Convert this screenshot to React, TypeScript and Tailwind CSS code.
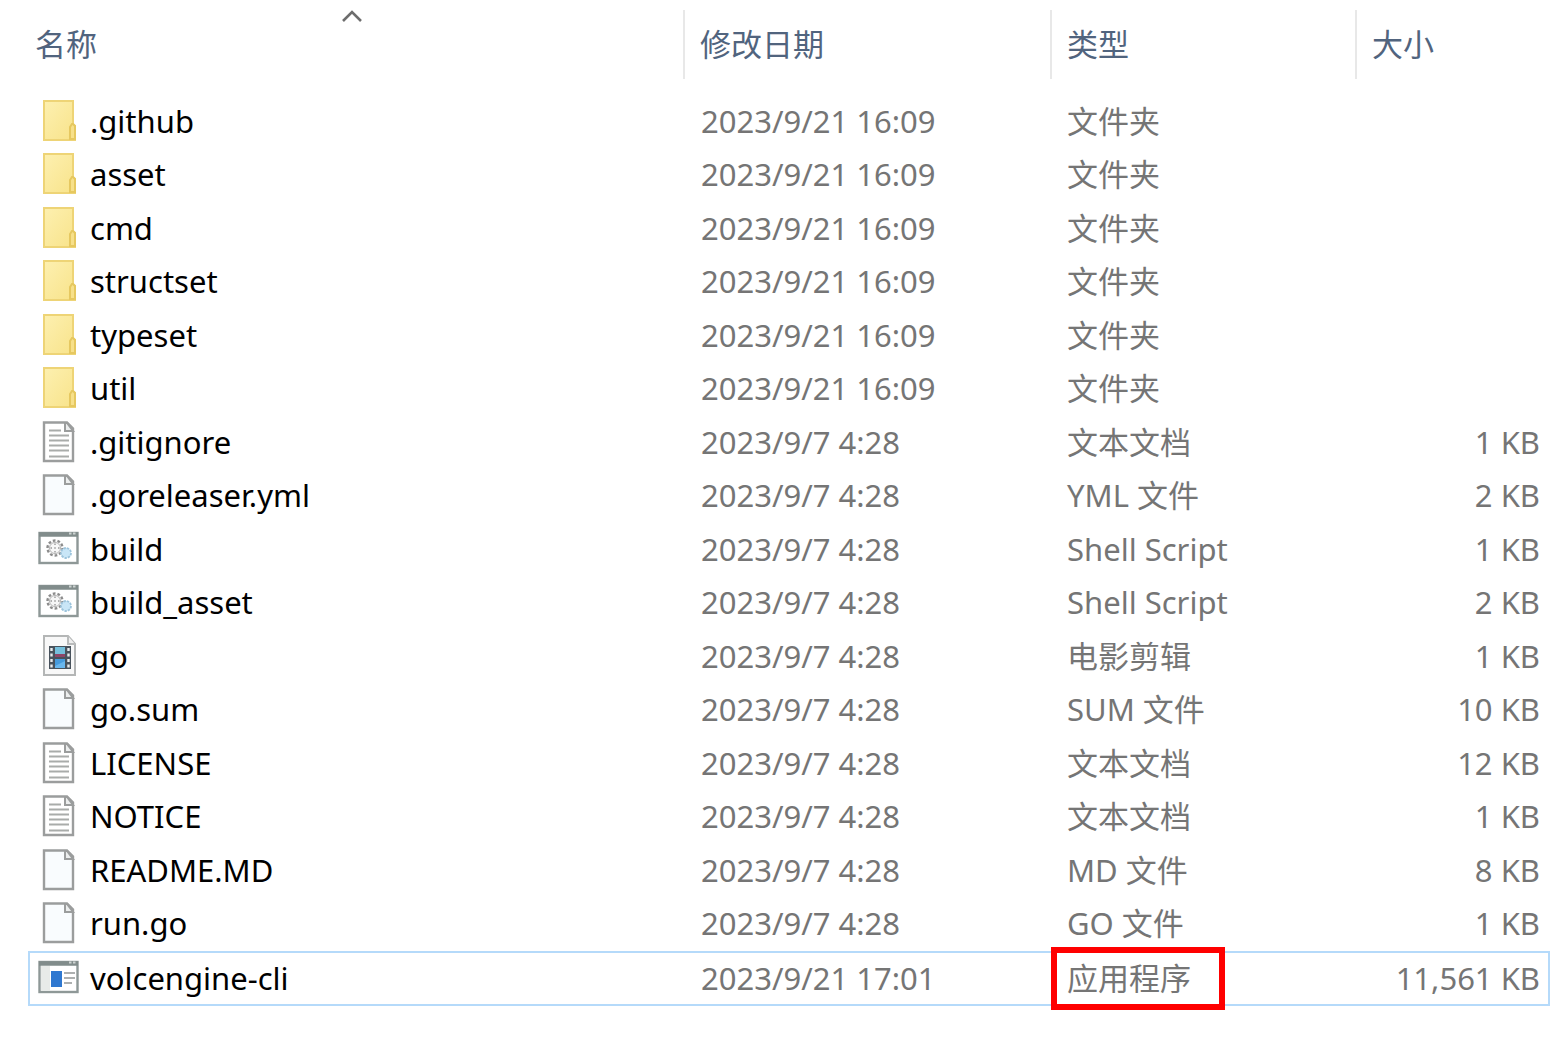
import React from "react";

type Kind = "folder" | "text" | "blank" | "script" | "movie" | "app";

interface Entry {
  name: string;
  kind: Kind;
  date: string;
  type: string;
  size?: string;
  selected?: boolean;
}

const entries: Entry[] = [
  { name: ".github", kind: "folder", date: "2023/9/21 16:09", type: "文件夹" },
  { name: "asset", kind: "folder", date: "2023/9/21 16:09", type: "文件夹" },
  { name: "cmd", kind: "folder", date: "2023/9/21 16:09", type: "文件夹" },
  { name: "structset", kind: "folder", date: "2023/9/21 16:09", type: "文件夹" },
  { name: "typeset", kind: "folder", date: "2023/9/21 16:09", type: "文件夹" },
  { name: "util", kind: "folder", date: "2023/9/21 16:09", type: "文件夹" },
  { name: ".gitignore", kind: "text", date: "2023/9/7 4:28", type: "文本文档", size: "1 KB" },
  { name: ".goreleaser.yml", kind: "blank", date: "2023/9/7 4:28", type: "YML 文件", size: "2 KB" },
  { name: "build", kind: "script", date: "2023/9/7 4:28", type: "Shell Script", size: "1 KB" },
  { name: "build_asset", kind: "script", date: "2023/9/7 4:28", type: "Shell Script", size: "2 KB" },
  { name: "go", kind: "movie", date: "2023/9/7 4:28", type: "电影剪辑", size: "1 KB" },
  { name: "go.sum", kind: "blank", date: "2023/9/7 4:28", type: "SUM 文件", size: "10 KB" },
  { name: "LICENSE", kind: "text", date: "2023/9/7 4:28", type: "文本文档", size: "12 KB" },
  { name: "NOTICE", kind: "text", date: "2023/9/7 4:28", type: "文本文档", size: "1 KB" },
  { name: "README.MD", kind: "blank", date: "2023/9/7 4:28", type: "MD 文件", size: "8 KB" },
  { name: "run.go", kind: "blank", date: "2023/9/7 4:28", type: "GO 文件", size: "1 KB" },
  { name: "volcengine-cli", kind: "app", date: "2023/9/21 17:01", type: "应用程序", size: "11,561 KB", selected: true },
];

function Folder() {
  return (
    <>
      <defs>
        <linearGradient id="folder-fill" x1="0" y1="0" x2="1" y2="1">
          <stop offset="0" stopColor="#fdf0b0" />
          <stop offset="1" stopColor="#f8e38a" />
        </linearGradient>
      </defs>
      <path d="M6 1h29v23l2 2v14H6z" fill="url(#folder-fill)" stroke="#eed476" strokeWidth="2" />
      <path d="M32 39V27l2-3h1l2 2v13z" fill="#f7e08a" stroke="#e6c860" strokeWidth="2" />
    </>
  );
}

function Page({ lines }: { lines?: boolean }) {
  return (
    <>
      <path d="M6 1.500h23l6 6V40H6z" fill={lines ? "#fff" : "#f9fcfe"} stroke="#9b9d9d" strokeWidth="2.400" />
      <path d="M27 2v8h8L29 2z" fill="#eceeee" stroke="#9b9d9d" strokeWidth="2" />
      {lines && (
        <path d="M11 9.500h12M11 14.500h20M11 19.500h20M11 24.500h20M11 29.500h20M11 35.500h20" stroke="#a9acaa" strokeWidth="2" />
      )}
    </>
  );
}

function Frame() {
  return (
    <>
      <rect x="1.500" y="5" width="38" height="30" fill="#fff" stroke="#8e9897" strokeWidth="2.400" />
      <path d="M1 6.500h39" stroke="#818c8b" strokeWidth="4.400" />
      <path d="M31 5.500h2.500M35 5.500h2.500" stroke="#cdd3d2" strokeWidth="2" />
    </>
  );
}

function Script() {
  return (
    <>
      <Frame />
      <circle cx="17" cy="20" r="7.500" fill="#f7f7f7" stroke="#8c8c8c" strokeWidth="2.400" strokeDasharray="2.700 2" />
      <circle cx="17" cy="20" r="5.500" fill="none" stroke="#b5b5b5" strokeWidth="1" />
      <path d="M17 15.500v9M12.500 20h9" stroke="#999" strokeWidth="1.400" strokeDasharray="1.500 2.250" />
      <circle cx="28" cy="25" r="5" fill="#c9e6f7" stroke="#9dc4dc" strokeWidth="1.800" strokeDasharray="2.400 1" />
    </>
  );
}

function Movie() {
  return (
    <>
      <path d="M6 1h24l7 8v31H6z" fill="#f8f8f8" stroke="#b4b6b6" strokeWidth="2" />
      <path d="M30 1v8h7" fill="#eee" stroke="#b9bbbb" strokeWidth="2" />
      <rect x="11" y="11" width="22" height="23" fill="#48525c" />
      <rect x="17" y="12" width="10" height="9" fill="#75bfdc" />
      <rect x="17" y="19" width="10" height="3" fill="#8d4568" />
      <rect x="17" y="24" width="10" height="9" fill="#469bdd" />
      <path d="M17 31l10-5v7H17z" fill="#69b7ee" />
      <path d="M13.500 13v20M30.500 13v20" stroke="#e8ebed" strokeWidth="2.400" strokeDasharray="3 2.500" />
    </>
  );
}

function AppWindow() {
  return (
    <>
      <Frame />
      <rect x="3" y="9" width="9" height="25" fill="#e8ebe9" />
      <rect x="13" y="14" width="11" height="16" fill="#2f78d0" />
      <path d="M26 16h11M26 21h11M26 26h8" stroke="#adb0b0" strokeWidth="2.200" />
    </>
  );
}

function FileIcon({ kind }: { kind: Kind }) {
  return (
    <svg viewBox="0 0 42 42" className="size-[42px] shrink-0" fill="none" aria-hidden="true">
      {kind === "folder" && <Folder />}
      {kind === "text" && <Page lines />}
      {kind === "blank" && <Page />}
      {kind === "script" && <Script />}
      {kind === "movie" && <Movie />}
      {kind === "app" && <AppWindow />}
    </svg>
  );
}

function HeaderCell({ label, sorted }: { label: string; sorted?: boolean }) {
  return (
    <th scope="col" className="p-0 pt-[10px] pb-4 text-left font-normal" aria-sort={sorted ? "ascending" : undefined}>
      <button
        type="button"
        className={
          sorted
            ? "relative flex h-[69px] w-full items-center pb-0.5 pl-[7px] text-[#51647e]"
            : "flex h-[69px] w-full items-center border-l-2 border-[#e8e8e8] pb-0.5 pl-[15px] text-[#51647e]"
        }
      >
        {label}
        {sorted && (
          <span className="absolute inset-x-0 top-0 flex justify-center pr-2">
            <svg viewBox="0 0 20 12" className="h-3 w-5" fill="none" stroke="#6d6d6d" strokeWidth="2.600" aria-hidden="true">
              <path d="M1 11l9-9 9 9" />
            </svg>
          </span>
        )}
      </button>
    </th>
  );
}

export default function App() {
  return (
    <main className="min-h-screen bg-white pr-2 pl-7 font-['Noto_Sans','Noto_Sans_CJK_SC',sans-serif] text-[31px] leading-10 whitespace-nowrap text-[#757575]">
      <table className="w-full table-fixed border-collapse">
        <colgroup>
          <col />
          <col className="w-[367px]" />
          <col className="w-[305px]" />
          <col className="w-[195px]" />
        </colgroup>
        <thead>
          <tr>
            <HeaderCell label="名称" sorted />
            <HeaderCell label="修改日期" />
            <HeaderCell label="类型" />
            <HeaderCell label="大小" />
          </tr>
        </thead>
        <tbody>
          {entries.map((e) => (
            <tr
              key={e.name}
              className={
                e.selected
                  ? "h-[55px] outline-2 -outline-offset-2 outline-[#b5dafa]"
                  : "odd:h-[53px] even:h-[54px]"
              }
            >
              <td className="p-0 pb-0.5 pl-[10px]">
                <div className="flex items-center gap-[10px] text-black">
                  <FileIcon kind={e.kind} />
                  <span>{e.name}</span>
                </div>
              </td>
              <td className="p-0 pb-0.5 pl-[18px]">{e.date}</td>
              <td className="relative p-0 pb-0.5 pl-[17px]">
                {e.type}
                {e.selected && <span className="absolute -top-1 left-px h-[63px] w-[174px] border-6 border-[#ff0000]" />}
              </td>
              <td className="p-0 pr-[10px] pb-0.5 text-right">{e.size}</td>
            </tr>
          ))}
        </tbody>
      </table>
    </main>
  );
}
